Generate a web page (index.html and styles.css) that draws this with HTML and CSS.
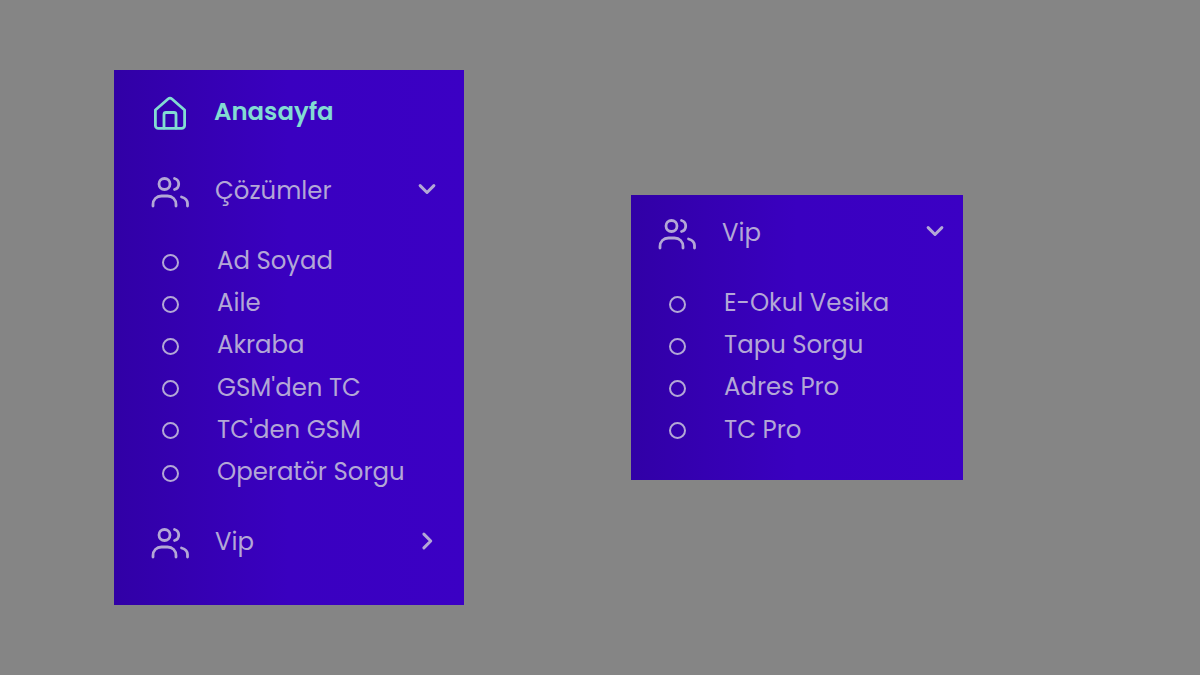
FILE: index.html
```html
<!DOCTYPE html>
<html lang="tr">
<head>
<meta charset="utf-8">
<title>Menu</title>
<link rel="stylesheet" href="styles.css">
</head>
<body>
<svg class="defs" width="0" height="0" aria-hidden="true">
  <symbol id="users" viewBox="0 0 38 34">
    <circle cx="13.500" cy="9" r="5.500"/>
    <path d="M2 31v-1.500c0-5 3.500-8.500 8.500-8.500h6c5 0 8.500 3.500 8.500 8.500V31"/>
    <path d="M23.500 3.500a5.700 5.700 0 0 1 0 11"/>
    <path d="M30.500 22c3.500 1 6 3.500 6 6.500V31"/>
  </symbol>
</svg>
<main class="stage">
  <nav class="panel panel-main">
    <a class="item item-home">
      <svg class="icon-home" viewBox="0 0 34 34"><path d="M2.400 14 15 3q2-1.700 4 0l12.600 11v15.400a3 3 0 0 1-3 3H5.400a3 3 0 0 1-3-3z"/><path d="M11 32V18.500a2 2 0 0 1 2-2h8a2 2 0 0 1 2 2V32"/></svg>
      <span class="home-label">Anasayfa</span>
    </a>
    <a class="item item-group">
      <svg class="icon-users"><use href="#users"/></svg>
      <span class="label">Çözümler</span>
      <svg class="chev" viewBox="0 0 16 16"><path d="M2.500 4.500 8 10l5.500-5.500"/></svg>
    </a>
    <ul class="sub">
      <li><i class="dot"></i>Ad Soyad</li>
      <li><i class="dot"></i>Aile</li>
      <li><i class="dot"></i>Akraba</li>
      <li><i class="dot"></i>GSM'den TC</li>
      <li><i class="dot"></i>TC'den GSM</li>
      <li><i class="dot"></i>Operatör Sorgu</li>
    </ul>
    <a class="item item-group item-last">
      <svg class="icon-users"><use href="#users"/></svg>
      <span class="label">Vip</span>
      <svg class="chev" viewBox="0 0 16 16"><path d="M5.500 2.500 11 8l-5.500 5.500"/></svg>
    </a>
  </nav>
  <nav class="panel panel-vip">
    <a class="item item-group">
      <svg class="icon-users"><use href="#users"/></svg>
      <span class="label">Vip</span>
      <svg class="chev" viewBox="0 0 16 16"><path d="M2.500 4.500 8 10l5.500-5.500"/></svg>
    </a>
    <ul class="sub">
      <li><i class="dot"></i>E-Okul Vesika</li>
      <li><i class="dot"></i>Tapu Sorgu</li>
      <li><i class="dot"></i>Adres Pro</li>
      <li><i class="dot"></i>TC Pro</li>
    </ul>
  </nav>
</main>
</body>
</html>
```
FILE: styles.css
```css
* { box-sizing: border-box; }
html, body { margin: 0; height: 100%; }
body { background: #858585; font-family: "Poppins", "Lato", "Open Sans", "Liberation Sans", sans-serif; overflow: hidden; }
.defs { display: block; height: 0; }
.stage { width: 1200px; height: 675px; display: flex; align-items: flex-start; padding: 70px 0 0 114px; }
.panel { background: linear-gradient(90deg, #3100a6 0%, #3a00c0 50%, #3b00c4 100%); color: #b3a7d6; }
.panel-main { width: 350px; height: 535px; padding-top: 21px; }
.panel-vip { width: 332px; height: 285px; margin: 125px 0 0 167px; padding-top: 17px; }
.panel-vip .item { padding-left: 27px; }
.panel-vip .chev { margin-right: 18px; }
.panel-vip .sub { padding-left: 37px; }
.item { display: flex; align-items: center; height: 40px; padding-left: 37px; }
.item-home { margin-bottom: 39px; }
.icon-home { width: 34px; height: 34px; margin: 3px 0 0 2px; fill: none; stroke: #82dcd2; stroke-width: 2.800; stroke-linejoin: round; stroke-linecap: round; flex: none; }
.home-label { margin-left: 27px; font-size: 24.400px; font-weight: 600; color: #82dcd2; }
.icon-users { width: 38px; height: 34px; margin-top: 3px; fill: none; stroke: #b3a7d6; stroke-width: 2.800; stroke-linecap: round; flex: none; }
.label { margin-left: 26px; font-size: 24.400px; flex: 1; }
.chev { width: 20px; height: 20px; margin-right: 27px; fill: none; stroke: #b3a7d6; stroke-width: 2.400; stroke-linecap: round; stroke-linejoin: round; flex: none; }
.sub { list-style: none; margin: 29.500px 0 0; padding: 0 0 0 47px; }
.sub li { display: flex; align-items: center; height: 42.200px; font-size: 24.400px; }
.dot { width: 17px; height: 17px; margin: 3px 38px 0 1px; border: 2px solid #b3a7d6; border-radius: 50%; flex: none; }
.item-last { margin-top: 28.500px; }
```
